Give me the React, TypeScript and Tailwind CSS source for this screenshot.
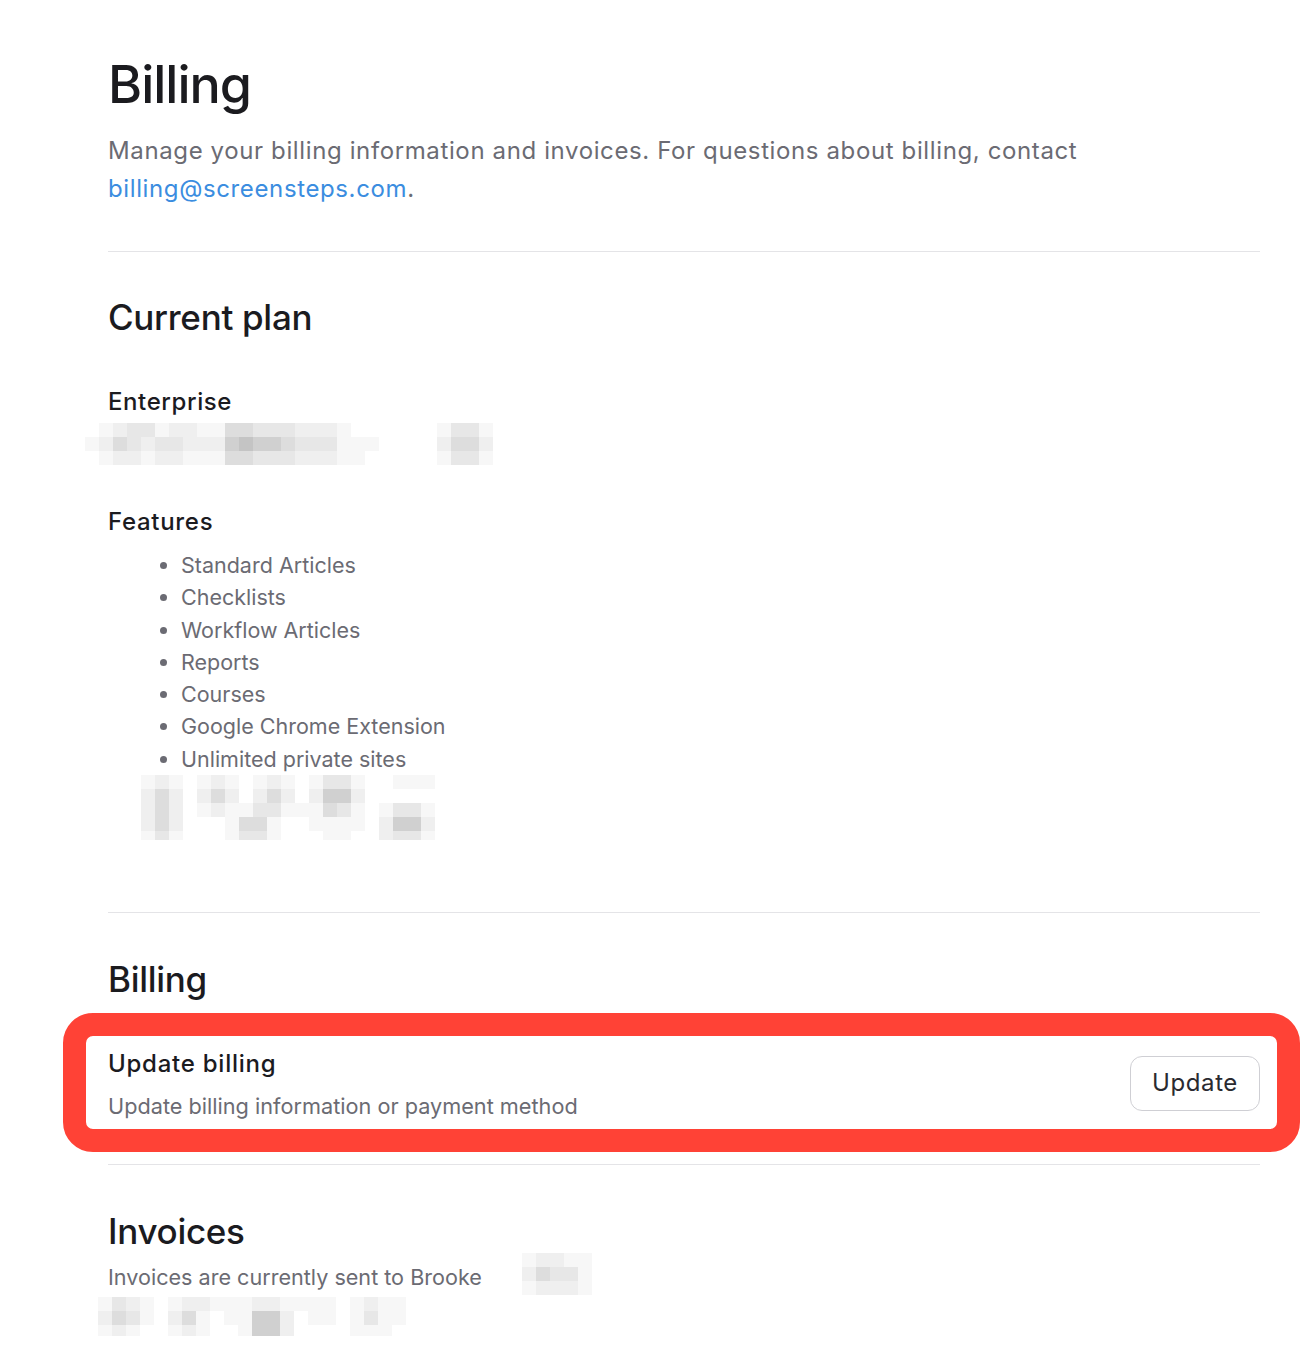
const shade: Record<string, string> = {
  ".": "bg-transparent",
  a: "bg-[#f7f7f7]",
  b: "bg-[#efefef]",
  c: "bg-[#e7e7e7]",
  d: "bg-[#dddddd]",
  e: "bg-[#d0d0d0]",
  f: "bg-[#c4c4c4]",
};

// redacted bits of the screenshot, drawn as pixel mosaics
function Mosaic({ rows, short }: { rows: string[]; short?: string }) {
  return (
    <div className="flex flex-col">
      {rows.map((row, r) => (
        <div
          key={r}
          className={`flex ${r === rows.length - 1 && short ? short : "h-[14px]"}`}
        >
          {row.split("").map((ch, c) => (
            <div key={c} className={`w-[14px] shrink-0 ${shade[ch]}`} />
          ))}
        </div>
      ))}
    </div>
  );
}

const planMosaic = [
  ".abccabbaaddcccbbba..",
  "abdcbccbbbefeedcccaaa",
  ".abbabbaaaddcccbbbaa.",
];
const planMosaicSmall = ["acca", "bddb", "acca"];

const featureMosaic = [
  "aba.aba.aba.acca..aaa",
  "bdb.bdb.bdb.beeb.....",
  "bdb.abaaccaaadca.acca",
  "bdb...adda..aaaa.beeb",
  "aca...acca...aa..bcca",
];

const invoiceMosaicSmall = ["abbaa", "bdcca", "abbba"];
const invoiceMosaic = [
  "acba.abbaaabbaaaa.abaa",
  "bdca.bda.aaeeb.aa.acaa",
  "aba..aba..aeeb....aaa.",
];

const features = [
  "Standard Articles",
  "Checklists",
  "Workflow Articles",
  "Reports",
  "Courses",
  "Google Chrome Extension",
  "Unlimited private sites",
];

export default function App() {
  return (
    <div className="min-h-[1352px] bg-white pl-[108px] pr-[52px] pt-[54px] font-['Inter','Noto_Sans',sans-serif] text-[#1b1b1f]">
      <h1 className="text-[52px] font-medium leading-[62px] tracking-[-1px]">
        Billing
      </h1>
      <p className="mt-[16px] max-w-[1000px] text-[24px] leading-[38px] tracking-[0.62px] text-[#6b6b73]">
        Manage your billing information and invoices. For questions about
        billing, contact{" "}
        <a className="text-[#3b8de0]" href="#">
          billing@screensteps.com
        </a>
        .
      </p>

      <div className="mt-[43px] border-t border-[#e4e4e7]" />

      <h2 className="mt-[43px] text-[35px] font-medium leading-[44px] tracking-[-0.3px]">
        Current plan
      </h2>
      <div className="mt-[47px] text-[24px] font-medium leading-[32px] tracking-[0.6px]">
        Enterprise
      </div>
      <div className="-ml-[23px] mt-[5px] flex gap-[58px]">
        <Mosaic rows={planMosaic} />
        <Mosaic rows={planMosaicSmall} />
      </div>

      <div className="mt-[41px] text-[24px] font-medium leading-[32px] tracking-[0.7px]">
        Features
      </div>
      <ul className="mt-[11px] list-disc pl-[73px] text-[21.5px] leading-[32.3px] text-[#6b6b73] marker:text-[#6b6b73]">
        {features.map((f) => (
          <li key={f}>{f}</li>
        ))}
      </ul>
      <div className="ml-[33px]">
        <Mosaic rows={featureMosaic} short="h-[9px]" />
      </div>

      <div className="mt-[72px] border-t border-[#e4e4e7]" />

      <h2 className="mt-[44px] text-[35px] font-medium leading-[44px] tracking-[-0.3px]">
        Billing
      </h2>
      <div className="relative mt-[44px] flex items-center justify-between">
        <div>
          <div className="mt-[3px] text-[24px] font-medium leading-[32px] tracking-[0.75px]">
            Update billing
          </div>
          <div className="mt-[10px] text-[21.7px] leading-[33px] text-[#6b6b73]">
            Update billing information or payment method
          </div>
        </div>
        <button className="mt-[-2px] h-[55px] w-[130px] rounded-[12px] border border-[#cfcfd4] bg-white text-[24px] tracking-[0.6px] text-[#2a2a30]">
          Update
        </button>
        <div className="pointer-events-none absolute -bottom-[29px] -left-[45px] -right-[40px] -top-[32px] rounded-[30px] border-[23px] border-[#ff4236]" />
      </div>

      <div className="mt-[41px] border-t border-[#e4e4e7]" />

      <h2 className="mt-[44px] text-[35px] font-medium leading-[44px] tracking-[-0.3px]">
        Invoices
      </h2>
      <div className="mt-[8px] flex items-start text-[21.6px] leading-[33px] text-[#6b6b73]">
        <span>Invoices are currently sent to Brooke</span>
        <div className="-mt-[8px] ml-[40px]">
          <Mosaic rows={invoiceMosaicSmall} />
        </div>
      </div>
      <div className="-ml-[10px] mt-[2px]">
        <Mosaic rows={invoiceMosaic} short="h-[11px]" />
      </div>
    </div>
  );
}
